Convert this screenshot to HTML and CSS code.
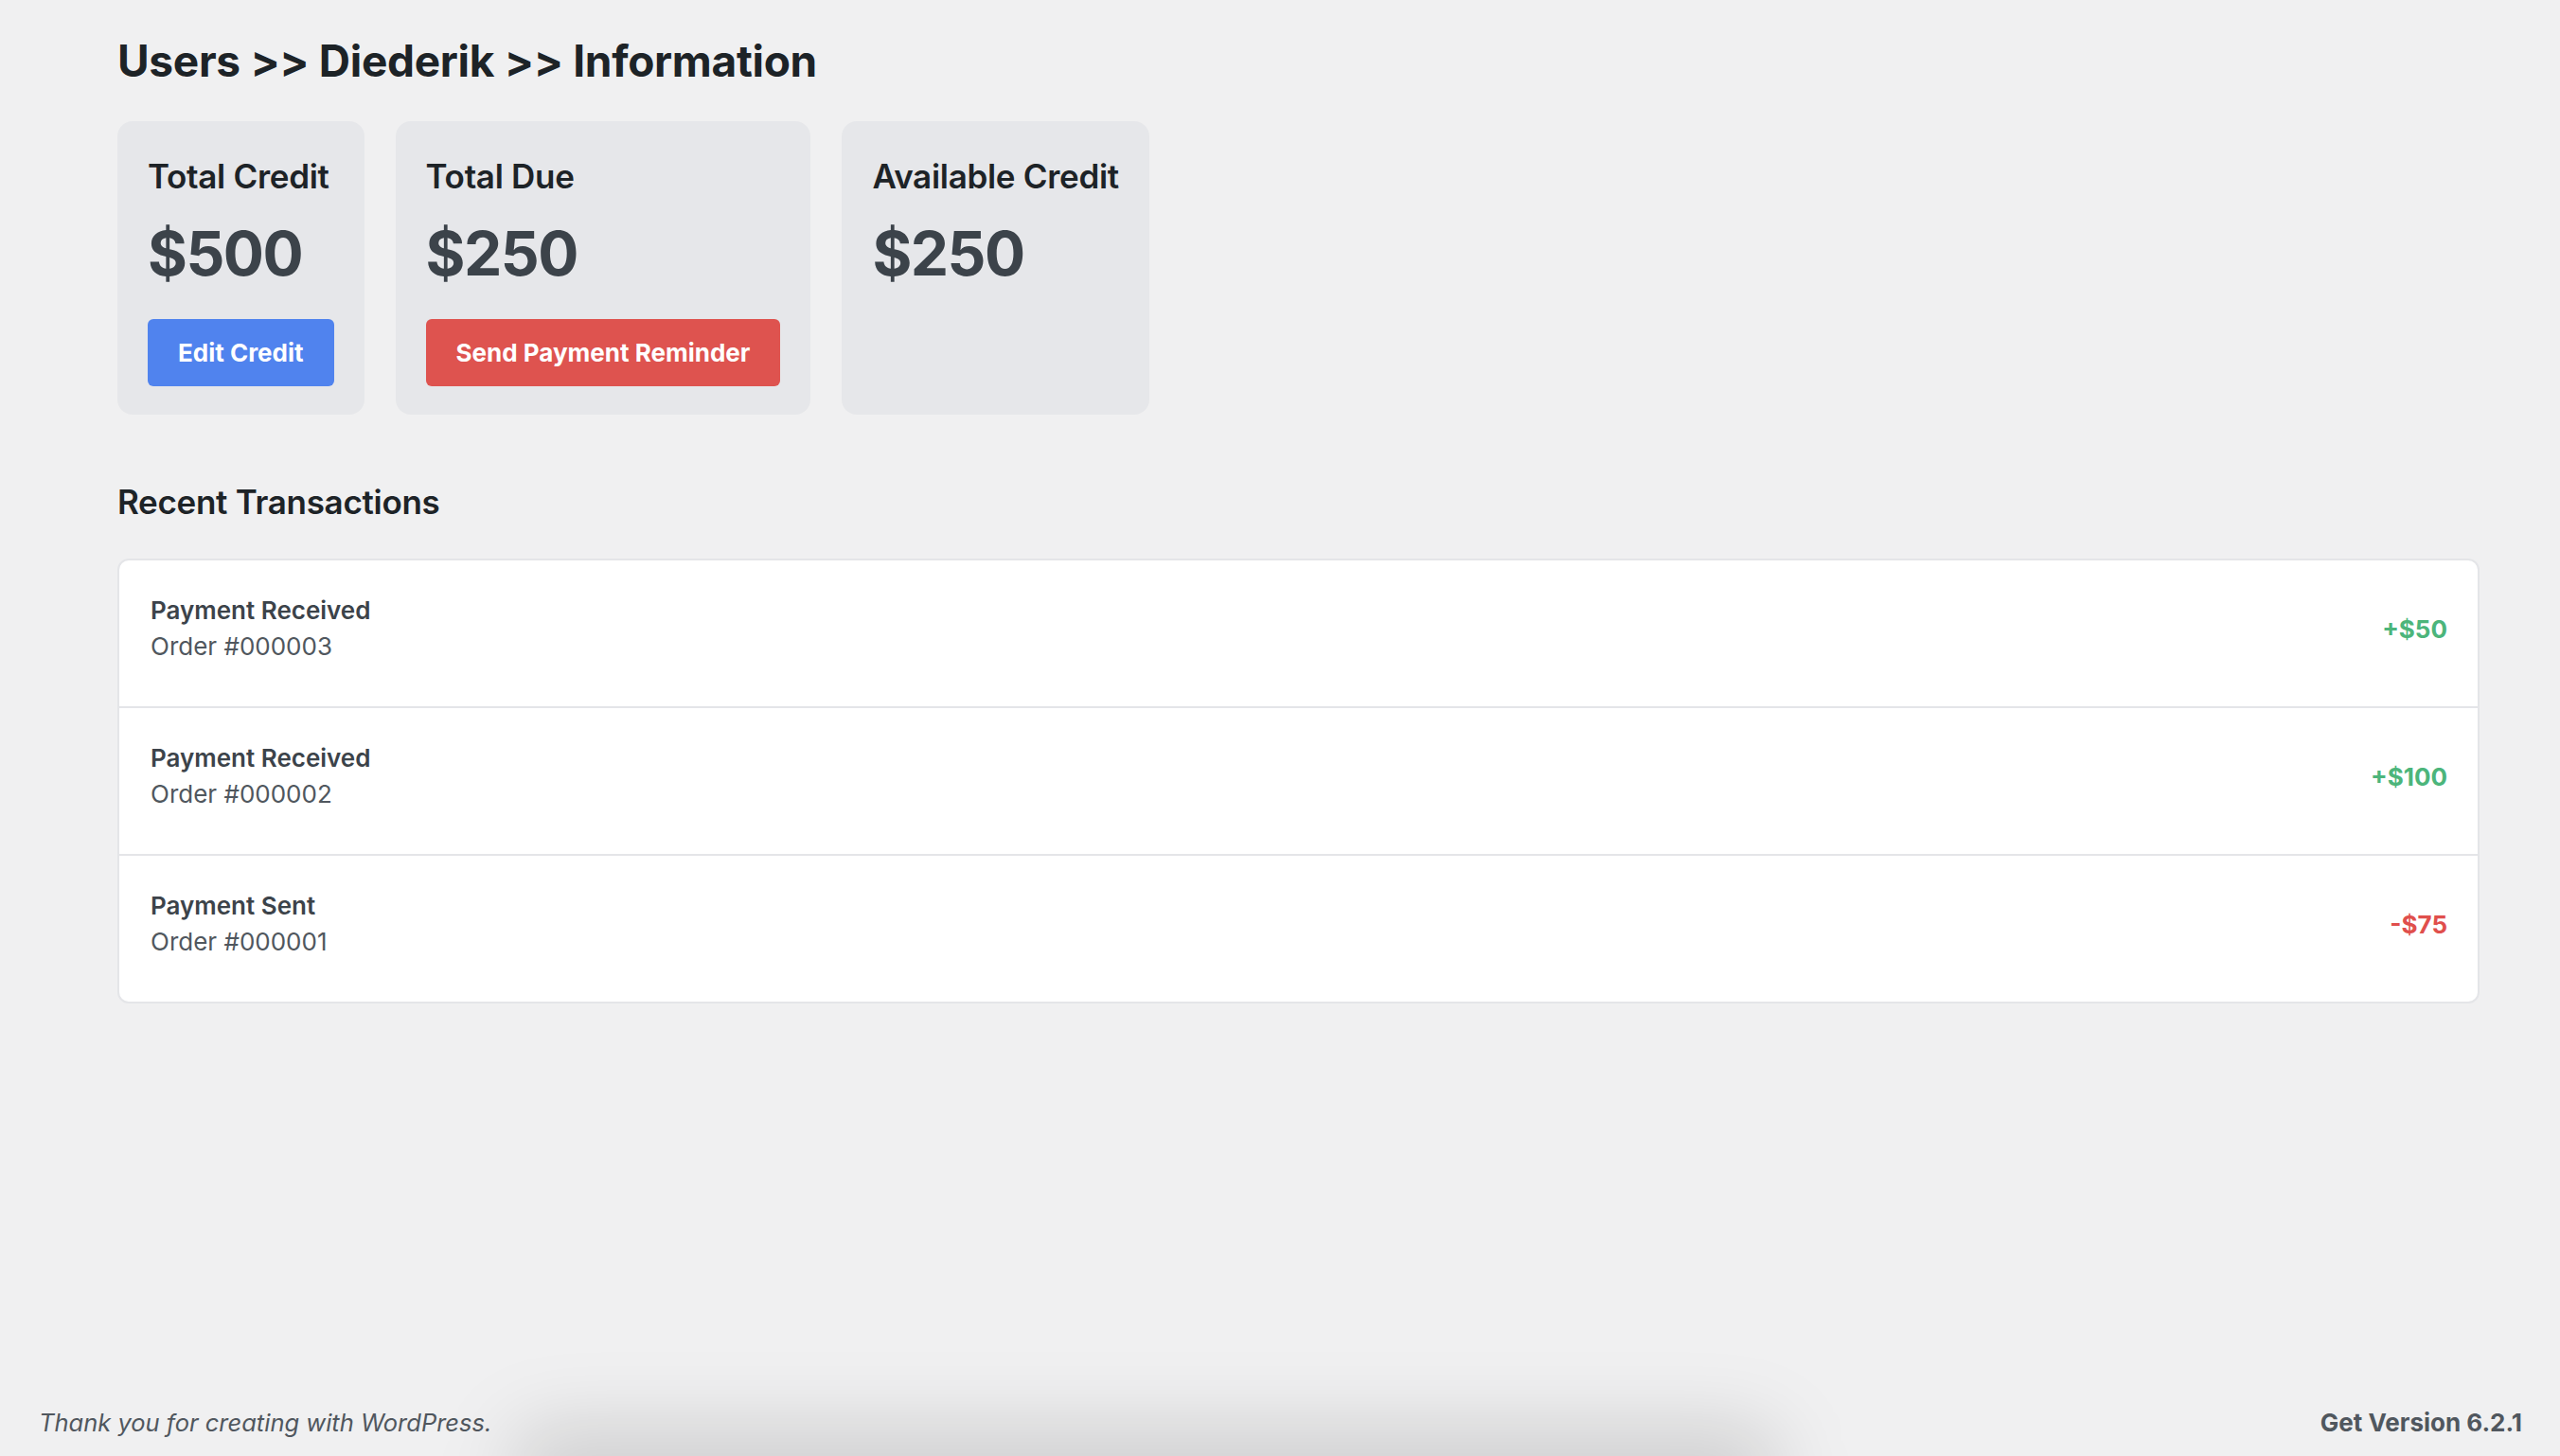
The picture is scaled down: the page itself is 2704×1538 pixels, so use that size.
FILE: index.html
```html
<!DOCTYPE html>
<html lang="en">
<head>
<meta charset="utf-8">
<title>Users &gt;&gt; Diederik &gt;&gt; Information</title>
<link rel="stylesheet" href="styles.css">
</head>
<body>
<div class="page">
  <main class="wrap">
    <h1 class="page-title">Users &gt;&gt; Diederik &gt;&gt; Information</h1>
    <section class="cards">
      <div class="card">
        <h3 class="card-label">Total Credit</h3>
        <div class="card-amount">$500</div>
        <button class="btn btn-blue" type="button">Edit Credit</button>
      </div>
      <div class="card">
        <h3 class="card-label">Total Due</h3>
        <div class="card-amount">$250</div>
        <button class="btn btn-red" type="button">Send Payment Reminder</button>
      </div>
      <div class="card">
        <h3 class="card-label">Available Credit</h3>
        <div class="card-amount">$250</div>
      </div>
    </section>
    <h2 class="section-title">Recent Transactions</h2>
    <ul class="transactions">
      <li class="tx">
        <div class="tx-info">
          <div class="tx-title">Payment Received</div>
          <div class="tx-order">Order #000003</div>
        </div>
        <div class="tx-amount pos">+$50</div>
      </li>
      <li class="tx">
        <div class="tx-info">
          <div class="tx-title">Payment Received</div>
          <div class="tx-order">Order #000002</div>
        </div>
        <div class="tx-amount pos">+$100</div>
      </li>
      <li class="tx">
        <div class="tx-info">
          <div class="tx-title">Payment Sent</div>
          <div class="tx-order">Order #000001</div>
        </div>
        <div class="tx-amount neg">-$75</div>
      </li>
    </ul>
  </main>
  <footer class="footer">
    <p class="footer-left">Thank you for creating with WordPress.</p>
    <p class="footer-right">Get Version 6.2.1</p>
  </footer>
</div>
<div class="dock-shadow"></div>
</body>
</html>
```

FILE: styles.css
```css
* { box-sizing: border-box; }
html, body { margin: 0; padding: 0; height: 100%; }
body {
  background: #f0f0f1;
  font-family: Inter, "Noto Sans", "Liberation Sans", sans-serif;
  color: #3c434a;
  overflow: hidden;
}
.page {
  height: 1538px;
  display: flex;
  flex-direction: column;
}
.wrap {
  flex: 1;
  padding: 0 85px 0 124px;
}
.page-title {
  margin: 0;
  padding-top: 36px;
  font-size: 46px;
  line-height: 56px;
  font-weight: 700;
  color: #1d2327;
  letter-spacing: -0.3px;
}
.cards {
  display: flex;
  gap: 33px;
  margin-top: 36px;
  align-items: stretch;
}
.card {
  background: #e6e7ea;
  border-radius: 16px;
  padding: 36px 32px 32px;
  height: 310px;
}
.card-label {
  margin: 0;
  font-size: 35px;
  line-height: 44px;
  font-weight: 600;
  color: #1d2327;
  letter-spacing: -0.3px;
}
.card-amount {
  margin-top: 22px;
  font-size: 64px;
  line-height: 76px;
  font-weight: 700;
  letter-spacing: -1.5px;
  color: #3c434a;
}
.btn {
  display: block;
  margin-top: 31px;
  height: 71px;
  padding: 0 32px;
  border: none;
  border-radius: 6px;
  font-family: inherit;
  font-size: 26px;
  font-weight: 700;
  color: #ffffff;
}
.btn-blue { background: #5083ee; }
.btn-red { background: #de534f; }
.section-title {
  margin: 70px 0 0;
  font-size: 35px;
  line-height: 44px;
  font-weight: 600;
  color: #1d2327;
  letter-spacing: -0.3px;
}
.transactions {
  list-style: none;
  margin: 38px 0 0;
  padding: 0;
  background: #ffffff;
  border: 2px solid #e4e5e8;
  border-radius: 12px;
}
.tx {
  display: flex;
  justify-content: space-between;
  align-items: center;
  height: 156px;
  padding: 0 32px 10px 33px;
  border-bottom: 2px solid #e4e5e8;
}
.tx:last-child { border-bottom: none; height: 154px; }
.tx-title {
  font-size: 26px;
  line-height: 38px;
  font-weight: 600;
  color: #3c434a;
}
.tx-order {
  font-size: 26px;
  line-height: 38px;
  color: #50575e;
}
.tx-amount {
  font-size: 26px;
  font-weight: 700;
}
.pos { color: #4cb57b; }
.neg { color: #e04f4c; }
.footer {
  display: flex;
  justify-content: space-between;
  align-items: center;
  padding: 0 40px 20px 41px;
  font-size: 25.5px;
  color: #50575e;
}
.footer p { margin: 0; }
.footer-left { font-style: italic; }
.footer-right { font-weight: 700; font-size: 26px; }
.dock-shadow {
  position: absolute;
  left: 540px;
  width: 1340px;
  bottom: -60px;
  height: 90px;
  border-radius: 40px;
  background: rgba(0,0,0,0.14);
  filter: blur(40px);
  pointer-events: none;
}
```
